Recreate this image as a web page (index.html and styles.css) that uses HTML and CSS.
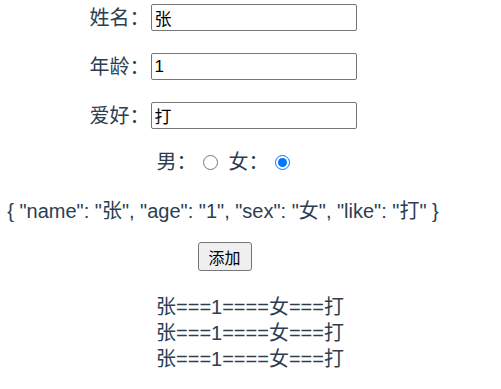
FILE: index.html
```html
<!DOCTYPE html>
<html lang="zh">
<head>
<meta charset="utf-8">
<title>demo</title>
<link rel="stylesheet" href="styles.css">
</head>
<body>
<div class="app">
  <div class="form">
    <div class="field"><span class="label">姓名：</span><input class="text" type="text" value="张"></div>
    <div class="field"><span class="label">年龄：</span><input class="text" type="text" value="1"></div>
    <div class="field"><span class="label">爱好：</span><input class="text" type="text" value="打"></div>
  </div>
  <div class="sex">
    <span class="label">男：</span><input class="radio" type="radio" name="sex" value="男">
    <span class="label">女：</span><input class="radio" type="radio" name="sex" value="女" checked>
  </div>
  <p class="json">{ "name": "张", "age": "1", "sex": "女", "like": "打" }</p>
  <div class="actions"><button class="btn" type="button">添加</button></div>
  <ul class="list">
    <li>张===1====女===打</li>
    <li>张===1====女===打</li>
    <li>张===1====女===打</li>
  </ul>
</div>
</body>
</html>
```

FILE: styles.css
```css
html, body {
  margin: 0;
  padding: 0;
  background: #ffffff;
}

.app {
  width: 446px;
  color: #2c3e50;
  font-family: "Liberation Sans", "Noto Sans CJK SC", sans-serif;
  font-size: 20px;
  line-height: 26px;
  text-align: center;
}

.form {
  display: flex;
  flex-direction: column;
  gap: 22px;
  padding-top: 4px;
}

.field {
  display: flex;
  justify-content: center;
  align-items: center;
  height: 27px;
}

.label {
  white-space: nowrap;
}

.text {
  box-sizing: border-box;
  width: 206px;
  height: 27px;
  margin: 0 0 0 1px;
  padding: 0 3px;
  border: 1px solid #767676;
  border-radius: 2px;
  font-family: "Liberation Sans", "Noto Sans CJK SC", sans-serif;
  font-size: 17px;
  color: #000000;
  background: #ffffff;
}

.sex {
  display: flex;
  justify-content: center;
  align-items: center;
  height: 24px;
  margin-top: 21px;
}

.radio {
  width: 15px;
  height: 15px;
  margin: 0 11px 0 6px;
}

.radio:last-child {
  margin-right: 0;
}

.json {
  margin: 24px 0 0 0;
  white-space: nowrap;
}

.actions {
  display: flex;
  justify-content: center;
  margin-top: 18px;
  padding-left: 3px;
}

.btn {
  box-sizing: border-box;
  width: 54px;
  height: 29px;
  padding: 0;
  border: 1px solid #767676;
  border-radius: 3px;
  background: #efefef;
  color: #000000;
  font-family: "Liberation Sans", "Noto Sans CJK SC", sans-serif;
  font-size: 16px;
}

.list {
  list-style: none;
  margin: 23px 0 0 0;
  padding: 0 0 0 54px;
}
```
